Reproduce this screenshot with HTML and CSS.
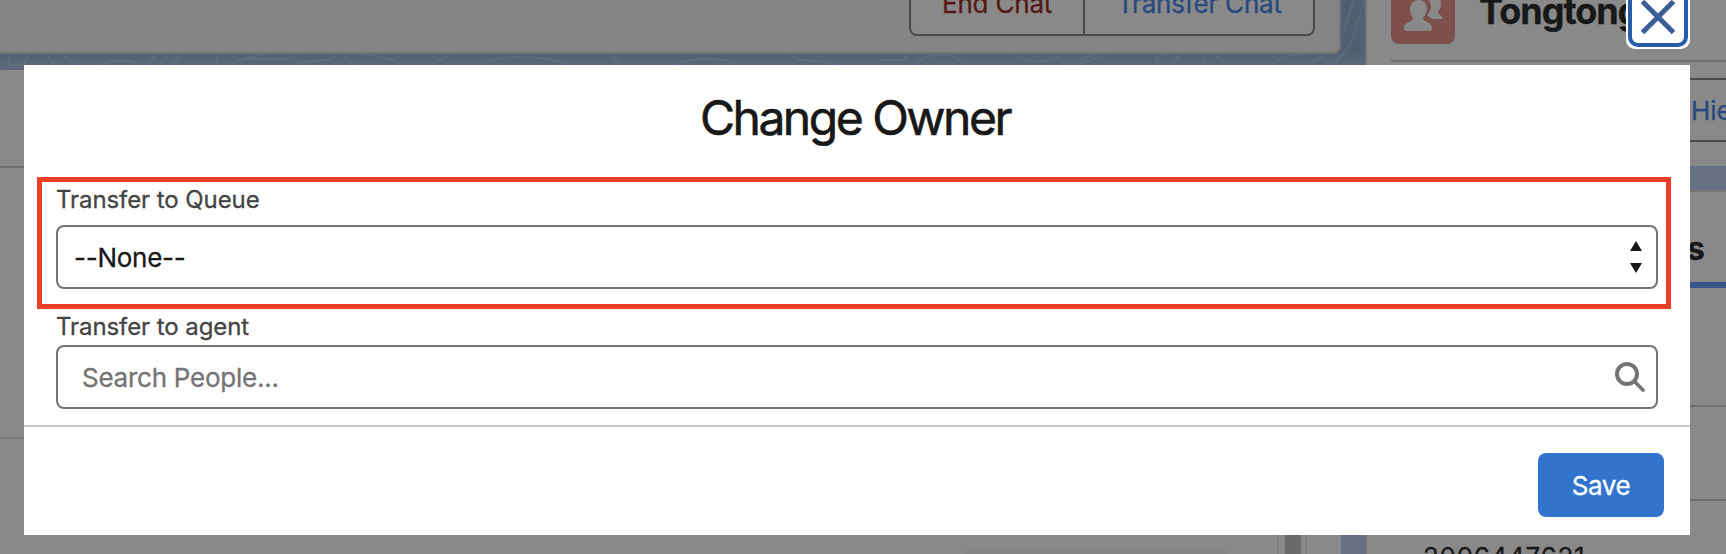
FILE: index.html
```html
<!DOCTYPE html>
<html lang="en">
<head>
<meta charset="utf-8">
<title>Change Owner</title>
<link rel="stylesheet" href="styles.css">
</head>
<body>
<div class="page">
  <main class="main">
    <header class="chat-bar">
      <div class="button-group">
        <button class="group-btn end"><span>End Chat</span></button>
        <button class="group-btn transfer"><span>Transfer Chat</span></button>
      </div>
    </header>
    <section class="detail">
      <div class="detail-head"></div>
      <div class="detail-row"></div>
      <div class="detail-foot"><div class="foot-left"><div class="placeholder"></div></div><div class="scroll"><div class="thumb"></div></div></div>
    </section>
  </main>
  <aside class="side">
    <section class="contact">
      <div class="contact-head">
        <div class="avatar">
          <svg width="64" height="64" viewBox="0 0 64 64"><g fill="#898989"><path d="M38 20c1-3 3-5 5-5 5 0 7 4 7 9 0 4-2 6-3 8-1 2 5 3 4 7 0 0-1 0-2 0h-8c-2-2-4-3-5-4 5-5 5-10 2-15z"/><path d="M27.500 20c5.500 0 8.500 4 8.500 9 0 5-3 7-4 9-1 4 9 3.500 9 10 0 2-1 3-3 3H16c-2 0-3-1-3-3 0-6.500 10-6 9-10-1-2-3-4-3-9 0-5 3-9 8.500-9z"/></g></svg>
        </div>
        <h2 class="contact-name">Tongtong</h2>
      </div>
      <div class="contact-actions">Hie</div>
    </section>
    <section class="related">
      <div class="tab">s</div>
      <div class="related-row first"></div>
      <div class="related-row"></div>
      <div class="phone">2006447621</div>
    </section>
  </aside>
  <svg class="contours" width="1366" height="72" viewBox="0 0 1366 72" fill="none" stroke="#778292" stroke-opacity=".28" stroke-width="1.800">
    <path d="M11 54c-6 7-2 12 5 12s12-4 12-12M47 54c2 7 7 11 12 11M62 54c4 5 9 7 16 11M100 65c12-6 32-6 40 0M149 65l6-11M160 65l8-11M173 65l7-11M217 65v-11M232 65c8-7 25-11 38-11M246 59h42l10-5M298 65c3-7 34 0 38-11M345 54c0 7 6 11 12 11M357 54c20 1 35 4 43 11M430 65l20-11M480 65c20-11 60-11 90 0M610 54l12 11M675 65c15-8 50-8 65 0M790 54c10 10 35 5 45 11M880 60h22l8-6M917 65c2-11 20-10 35-10l15 10M1012 54c8 8 33 11 47 2M1065 65l32-11M1076 65l34-11M1157 65c-3-8 4-11 10-11M1178 54c-2 8-5 10-9 11M1202 54l4 11M1227 65l-12-11M1272 65c10-11 26-10 34-11M1308 65c35-15 38-40 46-65M1344 30l9-30M1330 65c28-17 24-42 35-65"/>
  </svg>
  <div class="dialog">
    <button class="close" aria-label="Close"><svg width="36" height="36" viewBox="0 0 36 36" stroke="#3d5d98" stroke-width="5"><path d="M2.500 2.500L33.500 33.500M33.500 2.500L2.500 33.500"/></svg></button>
    <h1 class="title">Change Owner</h1>
    <div class="queue">
      <label class="label">Transfer to Queue</label>
      <div class="field select"><span>--None--</span>
        <svg width="12" height="32" viewBox="0 0 12 32" fill="#181818"><path d="M6 0l6 10H0zM0 22h12L6 32z"/></svg>
      </div>
    </div>
    <div class="agent">
      <label class="label">Transfer to agent</label>
      <div class="field search"><span>Search People...</span>
        <svg width="30" height="30" viewBox="0 0 30 30" fill="none" stroke="#747474"><circle cx="12" cy="12" r="10" stroke-width="4"/><path d="M19.500 19.500L28 28" stroke-width="3.600" stroke-linecap="round"/></svg>
      </div>
    </div>
    <footer class="footer"><button class="save">Save</button></footer>
  </div>
</div>
</body>
</html>
```

FILE: styles.css
```css
* { box-sizing: border-box; }
body { margin: 0; font-family: Inter, "Liberation Sans", sans-serif; color: #181818; -webkit-text-stroke: .3px; }
button { font: inherit; letter-spacing: inherit; background: none; border: 0; padding: 0; }
.page { position: relative; width: 1726px; height: 554px; overflow: hidden; display: flex; gap: 24px; background: linear-gradient(#525e71 50px, #5d6879 66px, #677082 166px); }
.main { flex: none; width: 1341px; display: flex; flex-direction: column; gap: 16px; }
.chat-bar { flex: none; height: 54px; background: #848484; border: solid #747474; border-width: 0 2px 2px 0; border-radius: 0 0 8px 0; padding-right: 24px; display: flex; justify-content: flex-end; align-items: flex-start; }
.button-group { display: flex; width: 406px; height: 36px; border: 2px solid #4a4a4a; border-top: 0; border-radius: 0 0 8px 8px; background: #898989; font-size: 26px; letter-spacing: -.2px; white-space: nowrap; }
.group-btn { display: flex; line-height: 32px; margin-top: -12px; height: 46px; }
.end { width: 174px; border-right: 2px solid #4a4a4a; padding-left: 31px; color: #571717; }
.transfer { padding-left: 32px; color: #264a80; }
.detail { flex: 1; background: #898989; display: flex; flex-direction: column; }
.detail-head { height: 98px; border-bottom: 2px solid #6f6f6f; }
.detail-row { height: 271px; border-bottom: 2px solid #7c7c7c; }
.detail-foot { flex: 1; display: flex; }
.foot-left { width: 1277px; padding: 111px 49px 0 0; display: flex; justify-content: flex-end; }
.placeholder { width: 263px; height: 4px; background: #848484; }
.scroll { width: 30px; padding: 0 4px 0 6px; border: solid #808080; border-width: 0 2px; }
.thumb { height: 100%; background: #6a6a6a; }
.side { flex: 1; min-width: 0; display: flex; flex-direction: column; gap: 24px; }
.contact { flex: none; height: 166px; background: #898989; border-left: 2px solid #747474; padding-left: 24px; overflow: hidden; }
.contact-head { height: 62px; border-bottom: 2px solid #6f6f6f; display: flex; gap: 24px; }
.avatar { width: 64px; height: 64px; margin-top: -20px; border-radius: 8px; background: #7e504b; }
.contact-name { margin: -11px 0 0; font-size: 36px; line-height: 44px; letter-spacing: -1px; }
.contact-actions { margin-top: 16px; height: 64px; border: solid #4a4a4a; border-width: 2px 0; padding-left: 300px; font-size: 26px; line-height: 61px; color: #264a80; white-space: nowrap; }
.related { flex: 1; background: #898989; border: solid #747474; border-width: 2px 0 0 2px; }
.tab { height: 96px; border-bottom: 6px solid #38568c; padding-left: 320px; font-size: 32px; font-weight: 700; line-height: 113px; }
.related-row { height: 94px; border-bottom: 2px solid #6f6f6f; }
.first { height: 119px; }
.phone { margin-top: 40px; padding-left: 56px; font-size: 26px; line-height: 32px; letter-spacing: .7px; }
.contours { position: absolute; left: 0; top: 0; clip-path: polygon(0 54px, 1342px 54px, 1342px 0, 1365px 0, 1365px 70px, 0 70px); }
.dialog { position: absolute; left: 24px; top: 65px; width: 1666px; height: 470px; background: #fff; display: flex; flex-direction: column; }
.close { position: absolute; top: -80px; right: 0; width: 64px; height: 64px; background: #fff; border-radius: 9px; display: flex; align-items: center; justify-content: center; }
.close::before { content: ""; position: absolute; inset: 2px; border: 4px solid #265ca8; border-radius: 10px; }
.title { margin: 0; padding-right: 4px; height: 112px; line-height: 106px; text-align: center; font-size: 48px; font-weight: 400; letter-spacing: -2.5px; -webkit-text-stroke: .6px; }
.queue { margin: 0 19px 0 13px; height: 132px; border: 5px solid #ec4026; padding: 2px 8px 0 14px; }
.label { display: block; font-size: 24px; line-height: 32px; letter-spacing: -.08px; color: #444; }
.queue .label { margin-bottom: 9px; }
.field { display: flex; align-items: center; justify-content: space-between; height: 64px; border: 2px solid #747474; border-radius: 8px; font-size: 26px; letter-spacing: -.25px; }
.select { padding: 0 14px 0 16px; }
.agent { margin: 0 32px; padding-top: 2px; }
.agent .label { margin-bottom: 2px; }
.search { padding: 0 11px 0 24px; color: #747474; }
.footer { margin-top: 16px; border-top: 2px solid #c9c9c9; padding: 26px 26px 0; display: flex; justify-content: flex-end; }
.save { width: 126px; height: 64px; border-radius: 8px; background: #3274cd; color: #fff; font-size: 26px; letter-spacing: -.4px; }
```
